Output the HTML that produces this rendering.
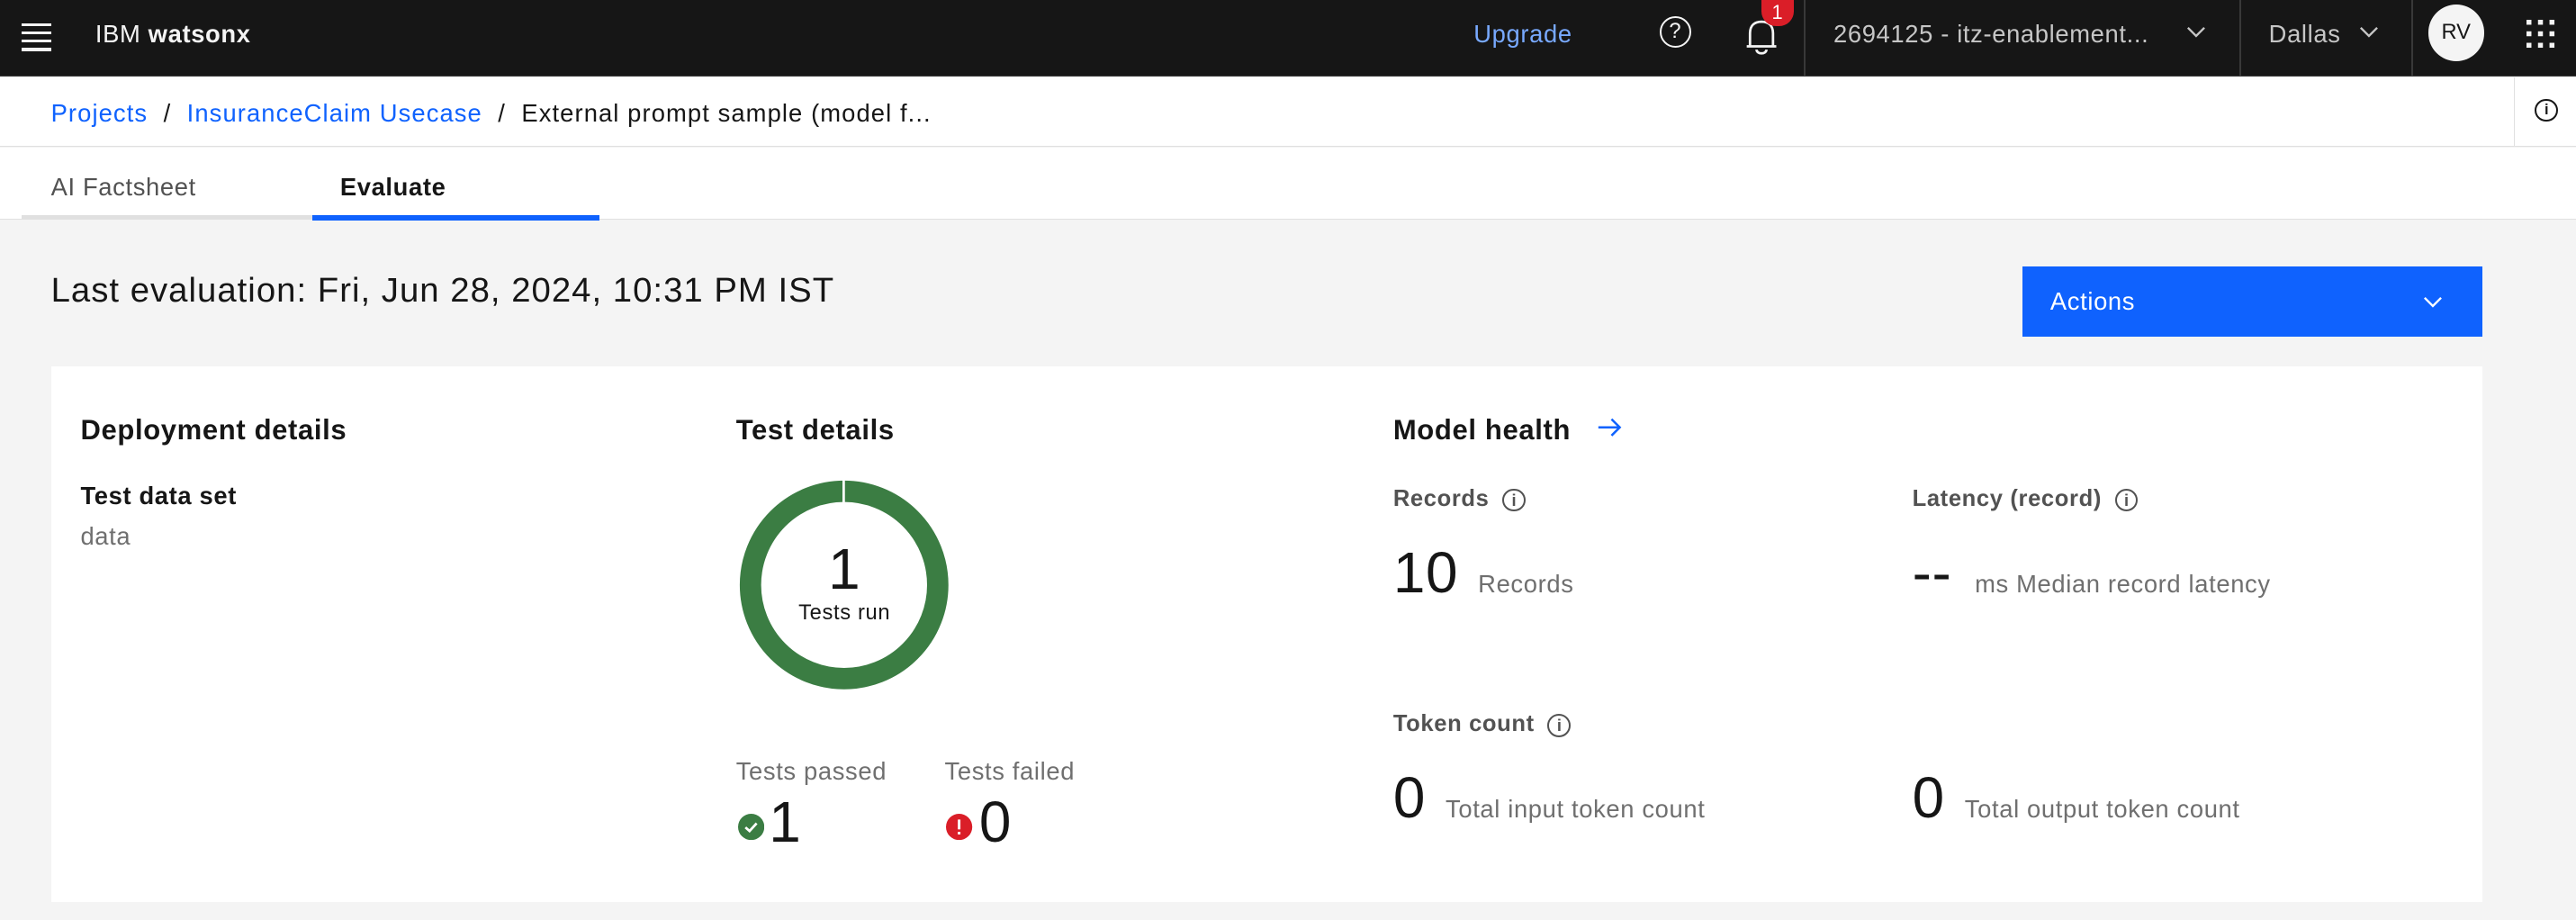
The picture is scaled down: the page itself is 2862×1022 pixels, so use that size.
<!DOCTYPE html>
<html><head><meta charset="utf-8"><style>
html,body{margin:0;padding:0;}
body{width:1568px;height:560px;zoom:1.82526;background:#f4f4f4;font-family:"Liberation Sans",sans-serif;color:#161616;position:relative;overflow:hidden;letter-spacing:0.35px;}
.a{position:absolute;white-space:nowrap;}
.hdr{position:absolute;left:0;top:0;width:1568px;height:46px;background:#161616;border-bottom:1px solid #393939;}
.w{color:#f4f4f4;font-size:15px;}
.lbl{font-size:14px;font-weight:bold;color:#161616;}
.g{color:#6f6f6f;font-size:15px;}
.info{display:inline-block;width:12px;height:12px;border:1.3px solid #161616;border-radius:50%;font-size:10px;line-height:12px;text-align:center;font-weight:bold;vertical-align:middle;margin-left:8px;letter-spacing:0;}
.big{font-size:35px;font-weight:300;}
</style></head><body>
<div class="hdr"></div>
<div class="a" style="left:13px;top:14px;width:18px;">
 <div style="height:2px;background:#f4f4f4;margin-bottom:3px"></div><div style="height:2px;background:#f4f4f4;margin-bottom:3px"></div><div style="height:2px;background:#f4f4f4;margin-bottom:3px"></div><div style="height:2px;background:#f4f4f4"></div></div>
<div class="a w" style="left:58px;top:12px;">IBM <b>watsonx</b></div>
<div class="a" style="left:897px;top:12px;color:#78a9ff;font-size:15px;">Upgrade</div>
<div class="a" style="left:1010px;top:10px;width:17px;height:17px;border:1.5px solid #f4f4f4;border-radius:50%;color:#f4f4f4;font-size:13px;text-align:center;line-height:17px;letter-spacing:0">?</div>
<svg class="a" style="left:1061px;top:8px" width="22" height="26" viewBox="0 0 22 26"><path d="M4 20 L4 12 C4 7 7 5 11 5 C15 5 18 7 18 12 L18 20 Z M2 20 H20" fill="none" stroke="#f4f4f4" stroke-width="1.5"/><path d="M8 22 C8 25 14 25 14 22" fill="none" stroke="#f4f4f4" stroke-width="1.5"/></svg>
<div class="a" style="left:1072px;top:0px;width:20px;height:16px;background:#da1e28;border-radius:0 0 9px 9px;color:#fff;font-size:12px;text-align:center;line-height:15px;">1</div>
<div class="a" style="left:1098px;top:0;width:1px;height:46px;background:#393939"></div>
<div class="a w" style="left:1116px;top:12px;color:#c6c6c6;">2694125 - itz-enablement...</div>
<svg class="a" style="left:1331px;top:16px" width="12" height="8"><path d="M1 1 L6 6 L11 1" fill="none" stroke="#c6c6c6" stroke-width="1.3"/></svg>
<div class="a" style="left:1363px;top:0;width:1px;height:46px;background:#393939"></div>
<div class="a w" style="left:1381px;top:12px;color:#c6c6c6;">Dallas</div>
<svg class="a" style="left:1436px;top:16px" width="12" height="8"><path d="M1 1 L6 6 L11 1" fill="none" stroke="#c6c6c6" stroke-width="1.3"/></svg>
<div class="a" style="left:1468px;top:0;width:1px;height:46px;background:#393939"></div>
<div class="a" style="left:1478px;top:3px;width:34px;height:34px;border-radius:50%;background:#f4f4f4;font-size:13px;text-align:center;line-height:34px;letter-spacing:0">RV</div>
<svg class="a" style="left:1538px;top:12px" width="18" height="18"><g fill="#f4f4f4"><rect x="0" y="0" width="3" height="3"/><rect x="7" y="0" width="3" height="3"/><rect x="14" y="0" width="3" height="3"/><rect x="0" y="7" width="3" height="3"/><rect x="7" y="7" width="3" height="3"/><rect x="14" y="7" width="3" height="3"/><rect x="0" y="14" width="3" height="3"/><rect x="7" y="14" width="3" height="3"/><rect x="14" y="14" width="3" height="3"/></g></svg>
<!-- breadcrumb -->
<div class="a" style="left:0;top:47px;width:1568px;height:42px;background:#fff;border-bottom:1px solid #e0e0e0;"></div>
<div class="a" style="left:1530px;top:47px;width:1px;height:42px;background:#e0e0e0"></div>
<div class="a" style="left:1543px;top:60px;width:12px;height:12px;border:1.3px solid #161616;border-radius:50%;font-size:9px;text-align:center;line-height:12px;font-weight:bold;letter-spacing:0">i</div>
<div class="a" style="left:31px;top:60px;font-size:15px;letter-spacing:0.6px"><span style="color:#0f62fe">Projects</span>&nbsp; / &nbsp;<span style="color:#0f62fe">InsuranceClaim Usecase</span>&nbsp; / &nbsp;External prompt sample (model f...</div>
<!-- tabs -->
<div class="a" style="left:0;top:90px;width:1568px;height:43px;background:#fff;border-bottom:1px solid #e0e0e0;"></div>
<div class="a" style="left:13px;top:131px;width:177px;height:2px;background:#e0e0e0"></div>
<div class="a" style="left:190px;top:131px;width:175px;height:3px;background:#0f62fe"></div>
<div class="a" style="left:31px;top:105px;font-size:15px;color:#525252;">AI Factsheet</div>
<div class="a" style="left:207px;top:105px;font-size:15px;font-weight:bold;">Evaluate</div>
<!-- main -->
<div class="a" style="left:31px;top:165px;font-size:21px;letter-spacing:0.55px">Last evaluation: Fri, Jun 28, 2024, 10:31 PM IST</div>
<div class="a" style="left:1231px;top:162px;width:280px;height:43px;background:#0f62fe;color:#fff;font-size:15px;"><span style="position:absolute;left:17px;top:13px">Actions</span><svg style="position:absolute;left:244px;top:18px" width="12" height="8"><path d="M1 1 L6 6 L11 1" fill="none" stroke="#fff" stroke-width="1.3"/></svg></div>
<div class="a" style="left:31px;top:223px;width:1480px;height:326px;background:#fff;"></div>
<div class="a" style="left:49px;top:252px;font-size:17px;font-weight:bold;">Deployment details</div>
<div class="a lbl" style="left:49px;top:293px;font-size:15px;">Test data set</div>
<div class="a g" style="left:49px;top:318px;">data</div>
<div class="a" style="left:448px;top:252px;font-size:17px;font-weight:bold;">Test details</div>
<svg class="a" style="left:450px;top:292px" width="128" height="128"><circle cx="64" cy="64" r="57" fill="none" stroke="#3b7d43" stroke-width="13"/><rect x="63" y="0" width="1.5" height="14" fill="#fff"/></svg>
<div class="a big" style="left:450px;top:326px;width:128px;text-align:center;">1</div>
<div class="a" style="left:450px;top:366px;width:128px;text-align:center;font-size:13px;">Tests run</div>
<div class="a g" style="left:448px;top:461px;">Tests passed</div>
<div class="a" style="left:575px;top:461px;color:#6f6f6f;font-size:15px;">Tests failed</div>
<svg class="a" style="left:449px;top:495px" width="16" height="16"><circle cx="8" cy="8" r="8" fill="#3b7d43"/><path d="M4.5 8.3 L7 10.5 L11.3 5.8" fill="none" stroke="#fff" stroke-width="1.5"/></svg>
<div class="a big" style="left:468px;top:480px;">1</div>
<svg class="a" style="left:576px;top:495px" width="16" height="16"><circle cx="8" cy="8" r="8" fill="#da1e28"/><rect x="7.2" y="3.5" width="1.6" height="6" fill="#fff"/><rect x="7.2" y="11" width="1.6" height="1.6" fill="#fff"/></svg>
<div class="a big" style="left:596px;top:480px;">0</div>
<div class="a" style="left:848px;top:252px;font-size:17px;font-weight:bold;">Model health</div>
<svg class="a" style="left:972px;top:253px" width="16" height="14"><path d="M1 7 H14 M9 2 L14 7 L9 12" fill="none" stroke="#0f62fe" stroke-width="1.4"/></svg>
<div class="a lbl" style="left:848px;top:296px;color:#525252">Records<span class="info" style="border-color:#525252;color:#525252">i</span></div>
<div class="a big" style="left:848px;top:328px;">10 <span class="g" style="margin-left:2px">Records</span></div>
<div class="a lbl" style="left:1164px;top:296px;color:#525252">Latency (record)<span class="info" style="border-color:#525252;color:#525252">i</span></div>
<div class="a big" style="left:1164px;top:328px;">-- <span class="g" style="margin-left:4px">ms Median record latency</span></div>
<div class="a lbl" style="left:848px;top:433px;color:#525252">Token count<span class="info" style="border-color:#525252;color:#525252">i</span></div>
<div class="a big" style="left:848px;top:465px;">0 <span class="g" style="margin-left:2px">Total input token count</span></div>
<div class="a big" style="left:1164px;top:465px;">0 <span class="g" style="margin-left:2px">Total output token count</span></div>
</body></html>
